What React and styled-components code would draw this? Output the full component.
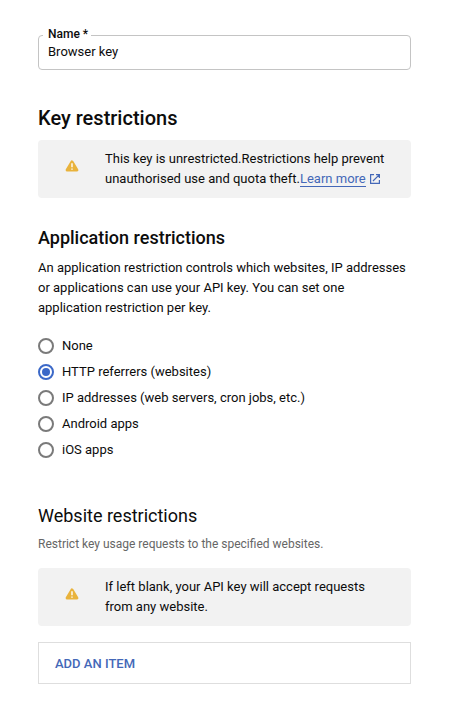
import React from 'react';
import styled, { createGlobalStyle } from 'styled-components';

const GlobalStyle = createGlobalStyle`
  *, *::before, *::after { box-sizing: border-box; }
  body { margin: 0; background: #fff; color: #0c0c0c; font-family: Roboto, sans-serif; }
  h2, p, fieldset, legend { margin: 0; padding: 0; font-weight: 400; }
`;

const Page = styled.main`
  width: 458px;
  height: 719px;
  padding: 27px 47px 0 38px;
  font-size: 13px;
  line-height: 20px;
  display: flex;
  flex-direction: column;
`;

const Field = styled.fieldset`
  height: 43px;
  flex: none;
  border: 1px solid #c4c4c4;
  border-radius: 4px;
  padding: 0 4px;
`;

const FieldLabel = styled.legend`
  height: 16px;
  padding: 0 3px 0 5px;
  font-size: 12px;
  font-weight: 500;
  line-height: 14px;
`;

const FieldValue = styled.div`
  padding-left: 5px;
  line-height: 18px;
`;

const SectionTitle = styled.h2`
  margin-top: ${({ $top }) => $top}px;
  font-size: ${({ $size }) => $size}px;
  font-weight: ${({ $weight }) => $weight};
  line-height: 24px;
`;

const Text = styled.p`
  margin-top: ${({ $top }) => $top}px;
  font-size: ${({ $small }) => ($small ? 12 : 13)}px;
  color: ${({ $small }) => ($small ? '#666' : 'inherit')};
  white-space: nowrap;
`;

const Notice = styled.div`
  display: flex;
  align-items: center;
  flex: none;
  height: 58px;
  margin-top: ${({ $top }) => $top}px;
  padding-left: 27px;
  gap: 26px;
  border-radius: 4px;
  background: #f2f2f2;
  white-space: nowrap;
`;

const NoticeIcon = styled.svg`
  width: 14px;
  height: 14px;
  margin-top: -6px;
`;

const Link = styled.a`
  color: #4468b8;
  border-bottom: 1px solid #4468b8;
`;

const ExternalIcon = styled.svg`
  width: 12px;
  height: 12px;
  margin-left: 3px;
  vertical-align: -2px;
`;

const Options = styled.div`
  display: flex;
  flex-direction: column;
  margin-top: 15px;
`;

const Option = styled.label`
  display: flex;
  align-items: center;
  gap: 8px;
  height: 26px;
`;

const Radio = styled.span`
  display: grid;
  place-items: center;
  width: 16px;
  height: 16px;
  border: 2px solid ${({ $on }) => ($on ? '#3c69c8' : '#7a7a7a')};
  border-radius: 50%;
  &::after {
    content: '';
    width: 8px;
    height: 8px;
    border-radius: 50%;
    background: ${({ $on }) => ($on ? '#3c69c8' : 'transparent')};
  }
`;

const AddButton = styled.button`
  height: 42px;
  flex: none;
  margin-top: 16px;
  padding: 2px 16px 0;
  border: 1px solid #dedede;
  background: #fff;
  color: #4468b8;
  font: 500 13px/20px Roboto, sans-serif;
  text-align: left;
`;

const Warning = () => (
  <NoticeIcon viewBox="0 0 14 14">
    <path d="M7 3 L11.8 11 H2.2 Z" fill="#e9b33c" stroke="#e9b33c" strokeWidth="3.2" strokeLinejoin="round" />
    <path d="M6.3 4.3h1.4v4H6.3zM6.3 9.4h1.4v1.4H6.3z" fill="#fff" />
  </NoticeIcon>
);

const options = [
  'None',
  'HTTP referrers (websites)',
  'IP addresses (web servers, cron jobs, etc.)',
  'Android apps',
  'iOS apps',
];

export default function App() {
  return (
    <Page>
      <GlobalStyle />
      <Field>
        <FieldLabel>Name *</FieldLabel>
        <FieldValue>Browser key</FieldValue>
      </Field>
      <SectionTitle $top={36} $size={20} $weight={500}>Key restrictions</SectionTitle>
      <Notice $top={10}>
        <Warning />
        <div>
          This key is unrestricted.Restrictions help prevent<br />
          unauthorised use and quota theft.<Link>Learn more</Link>
          <ExternalIcon viewBox="0 0 12 12" fill="none" stroke="#4468b8" strokeWidth="1.2">
            <path d="M5 1.6H1.6v8.8h8.8V7M7 1.6h3.4V5M10.4 1.6 4 8" />
          </ExternalIcon>
        </div>
      </Notice>
      <SectionTitle $top={28} $size={18} $weight={500}>Application restrictions</SectionTitle>
      <Text $top={8}>
        An application restriction controls which websites, IP addresses<br />
        or applications can use your API key. You can set one<br />
        application restriction per key.
      </Text>
      <Options>
        {options.map((label, i) => (
          <Option key={label}><Radio $on={i === 1} />{label}</Option>
        ))}
      </Options>
      <SectionTitle $top={41} $size={18} $weight={400}>Website restrictions</SectionTitle>
      <Text $top={6} $small>Restrict key usage requests to the specified websites.</Text>
      <Notice $top={14}>
        <Warning />
        <div>
          If left blank, your API key will accept requests<br />
          from any website.
        </div>
      </Notice>
      <AddButton>ADD AN ITEM</AddButton>
    </Page>
  );
}
